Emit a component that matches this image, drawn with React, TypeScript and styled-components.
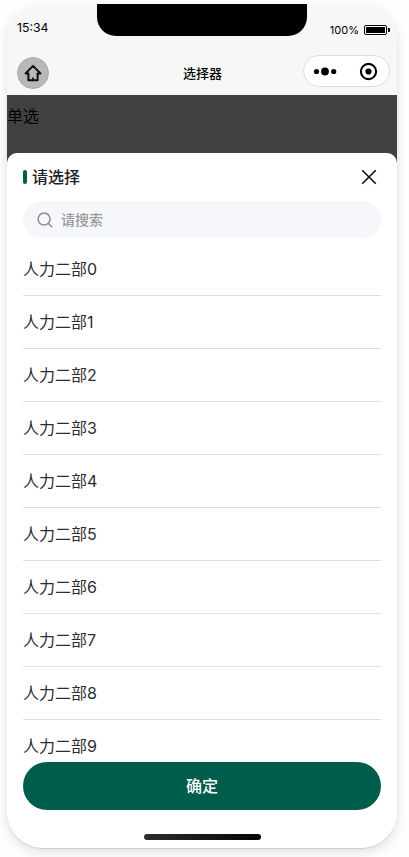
import React from "react";
import styled, { createGlobalStyle } from "styled-components";

const Global = createGlobalStyle`
  * { box-sizing: border-box; }
  html, body { margin: 0; background: #fefefe; }
  body { font-family: Inter, "Noto Sans CJK SC", sans-serif; overflow: hidden; }
  button, input { font: inherit; border: 0; padding: 0; margin: 0; background: none; }
`;

const Stage = styled.main`
  height: 857px;
  padding: 4px 12px 9px 7px;
  overflow: hidden;
`;

const Phone = styled.div`
  position: relative;
  display: flex;
  flex-direction: column;
  width: 390px;
  height: 844px;
  border-radius: 36px;
  overflow: hidden;
  background: #fff;
  box-shadow: 0 1px 1px rgba(0, 0, 0, 0.12), 0 4px 12px rgba(0, 0, 0, 0.12);
`;

const Header = styled.header`
  flex: none;
  height: 91px;
  background: #f7f7f7;
  color: #000;
`;

const Notch = styled.div`
  position: absolute;
  top: 0;
  left: 90px;
  width: 210px;
  height: 32px;
  border-radius: 0 0 19px 19px;
  background: #000;
`;

const StatusBar = styled.div`
  display: flex;
  justify-content: space-between;
  align-items: center;
  height: 47px;
  padding: 1px 6px 0 10px;
`;

const Time = styled.span`
  font-size: 12.3px;
  line-height: 16px;
`;

const Power = styled.div`
  display: flex;
  align-items: center;
  gap: 5px;
  padding-top: 3px;
  font-size: 11px;
  line-height: 14px;
`;

const NavBar = styled.div`
  display: grid;
  grid-template-columns: 87px 1fr 87px;
  align-items: center;
  height: 44px;
  padding: 0 7px 0 10px;
`;

const HomeButton = styled.button`
  display: flex;
  align-items: center;
  justify-content: center;
  width: 32px;
  height: 32px;
  margin-top: -1px;
  border-radius: 50%;
  background: #b8b8b8;
  border: 1px solid #aaa;
`;

const NavTitle = styled.h1`
  margin: -1px 0 0 -2px;
  text-align: center;
  font-size: 13px;
  line-height: 20px;
  font-weight: 500;
`;

const Capsule = styled.div`
  display: flex;
  align-items: center;
  width: 87px;
  height: 32px;
  margin-top: -4px;
  border: 1px solid #dedede;
  border-radius: 16px;
  background: #fff;
`;

const PageLabel = styled.div`
  flex: none;
  height: 68px;
  padding-top: 9px;
  font-size: 16px;
  line-height: 24px;
  color: #000;
  background: #414142;
`;

const Sheet = styled.section`
  display: flex;
  flex-direction: column;
  flex: 1;
  min-height: 0;
  margin-top: -10px;
  padding: 0 16px;
  border-radius: 10px 10px 0 0;
  background: #fff;
`;

const SheetHead = styled.div`
  display: flex;
  align-items: center;
  flex: none;
  height: 48px;
`;

const Accent = styled.i`
  width: 4px;
  height: 14px;
  margin-right: 5px;
  border-radius: 2px;
  background: #005c4d;
`;

const SheetTitle = styled.h2`
  flex: 1;
  margin: 0;
  font-size: 16px;
  line-height: 24px;
  font-weight: 500;
  color: #1d2129;
`;

const CloseButton = styled.button`
  display: flex;
  margin-right: 4px;
`;

const SearchBox = styled.label`
  display: flex;
  align-items: center;
  flex: none;
  gap: 8px;
  height: 37px;
  padding-left: 14px;
  border-radius: 19px;
  background: #f5f7fb;
`;

const SearchInput = styled.input`
  flex: 1;
  min-width: 0;
  font-size: 14px;
  line-height: 20px;
  font-weight: 500;
  outline: 0;
  &::placeholder { color: #999; opacity: 1; }
`;

const List = styled.ul`
  flex: 1;
  min-height: 0;
  margin: 5px 0 0;
  padding: 0;
  overflow: hidden;
  list-style: none;
`;

const Item = styled.li`
  height: 53px;
  padding-top: 14px;
  border-bottom: 1px solid #dedfe0;
  font-size: 16px;
  line-height: 24px;
  color: #2a2d31;
`;

const Confirm = styled.button`
  flex: none;
  height: 48px;
  border-radius: 24px;
  background: #005c4d;
  color: #fff;
  font-size: 16px;
  line-height: 24px;
  font-weight: 500;
`;

const Footer = styled.div`
  display: flex;
  justify-content: center;
  flex: none;
  height: 38px;
  padding: 24px 0 0 1px;
`;

const HomeIndicator = styled.div`
  width: 117px;
  height: 6px;
  border-radius: 3px;
  background: linear-gradient(90deg, #2c2c2c, #050505);
`;

const departments = Array.from({ length: 10 }, (_, i) => `人力二部${i}`);

export default function App() {
  return (
    <Stage>
      <Global />
      <Phone>
        <Header>
          <Notch />
          <StatusBar>
            <Time>15:34</Time>
            <Power>
              100%
              <svg width="27" height="10" viewBox="0 0 27 10">
                <rect x="0.5" y="0.5" width="22" height="9" rx="1.5" fill="#fff" stroke="#000" />
                <rect x="2" y="2" width="19" height="6" rx="0.5" />
                <path d="M24 3h1a1 1 0 0 1 1 1v2a1 1 0 0 1-1 1h-1z" />
              </svg>
            </Power>
          </StatusBar>
          <NavBar>
            <HomeButton aria-label="首页">
              <svg width="18" height="18" viewBox="0 0 18 18" fill="none" stroke="#0c0c0c" strokeWidth="2" strokeLinejoin="round">
                <path d="M9 1.9 1.6 9.4h2.8v6.8h9.2V9.4h2.8z" />
                <path d="M9 13.6v2.4" strokeWidth="1.7" />
              </svg>
            </HomeButton>
            <NavTitle>选择器</NavTitle>
            <Capsule>
              <svg width="85" height="30" viewBox="0 0 85 30">
                <circle cx="12.5" cy="15.5" r="2.6" />
                <circle cx="21" cy="15.5" r="3.9" />
                <circle cx="29.7" cy="15.5" r="2.6" />
                <circle cx="64.5" cy="15.5" r="7.6" fill="none" stroke="#000" strokeWidth="2.1" />
                <circle cx="64.5" cy="15.5" r="3.1" />
              </svg>
            </Capsule>
          </NavBar>
        </Header>
        <PageLabel>单选</PageLabel>
        <Sheet>
          <SheetHead>
            <Accent />
            <SheetTitle>请选择</SheetTitle>
            <CloseButton aria-label="关闭">
              <svg width="16" height="16" viewBox="0 0 16 16" fill="none" stroke="#111" strokeWidth="1.6">
                <path d="m1.2 1.2 13.6 13.6M14.8 1.2 1.2 14.8" />
              </svg>
            </CloseButton>
          </SheetHead>
          <SearchBox>
            <svg width="16" height="16" viewBox="0 0 16 16" fill="none" stroke="#8c8f93" strokeWidth="1.5" strokeLinecap="round">
              <circle cx="7.1" cy="7.1" r="6" />
              <path d="m11.5 11.5 3.3 3.3" />
            </svg>
            <SearchInput placeholder="请搜索" />
          </SearchBox>
          <List>
            {departments.map((name) => (
              <Item key={name}>{name}</Item>
            ))}
          </List>
          <Confirm>确定</Confirm>
          <Footer>
            <HomeIndicator />
          </Footer>
        </Sheet>
      </Phone>
    </Stage>
  );
}
